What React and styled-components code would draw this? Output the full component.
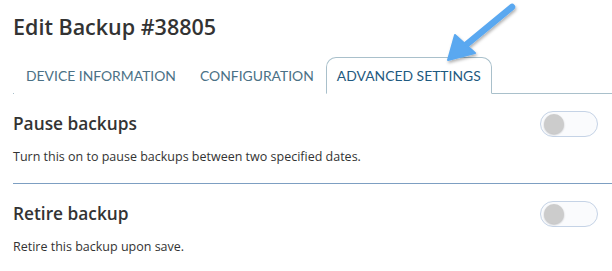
import React, { useState } from "react";
import styled, { createGlobalStyle } from "styled-components";

const GlobalStyle = createGlobalStyle`
  body {
    margin: 0;
    background: #ffffff;
    font-family: "Open Sans", "Liberation Sans", sans-serif;
    color: #333333;
  }
`;

const Page = styled.div`
  position: relative;
  padding: 13px 0 0 13px;
  width: 612px;
  box-sizing: border-box;
`;

const Title = styled.h1`
  margin: 0;
  font-size: 21.5px;
  font-weight: 600;
  line-height: 28px;
  color: #333333;
`;

const TabBar = styled.div`
  display: flex;
  margin-top: 16px;
  padding-left: 1px;
  height: 36px;
  border-bottom: 1px solid #a9c0cb;
`;

const Tab = styled.div`
  display: flex;
  align-items: center;
  padding: 0 ${(p) => (p.active ? "10px" : "12px")};
  margin-bottom: -1px;
  font-family: Lato, "Open Sans", sans-serif;
  font-size: 13.9px;
  color: ${(p) => (p.active ? "#1f5a80" : "#4b7186")};
  background: #ffffff;
  border: ${(p) => (p.active ? "1px solid #a9c0cb" : "none")};
  border-bottom-color: #ffffff;
  border-radius: 10px 10px 0 0;
`;

const Section = styled.div`
  padding: 17px 14px ${(p) => (p.last ? "0" : "17px")} 0;
  border-bottom: ${(p) => (p.last ? "none" : "1px solid #7d9fc2")};
`;

const Row = styled.div`
  display: flex;
  align-items: center;
  justify-content: space-between;
`;

const SectionTitle = styled.h2`
  margin: 0;
  font-size: 17.3px;
  font-weight: 600;
  line-height: 26px;
  color: #333333;
`;

const Description = styled.p`
  margin: 11px 0 0;
  font-size: 12.5px;
  line-height: 18px;
  color: #333333;
`;

const Switch = styled.button`
  position: relative;
  width: 58px;
  height: 26px;
  padding: 0;
  border-radius: 13px;
  border: 1px solid #c5d3e6;
  background: ${(p) => (p.on ? "#5aa8f0" : "#fafbfd")};
  cursor: pointer;

  &::after {
    content: "";
    position: absolute;
    top: 2px;
    left: ${(p) => (p.on ? "34px" : "3px")};
    width: 20px;
    height: 20px;
    border-radius: 50%;
    background: #cccccc;
    box-shadow: 0 1px 2px rgba(0, 0, 0, 0.25);
  }
`;

const Arrow = styled.svg`
  position: absolute;
  left: 440px;
  top: 0;
  pointer-events: none;
`;

const PointerArrow = () => (
  <Arrow width="90" height="72" viewBox="0 0 90 72">
    <defs>
      <filter id="sh" x="-20%" y="-20%" width="140%" height="140%">
        <feDropShadow dx="1" dy="2" stdDeviation="1.5" floodColor="#000" floodOpacity="0.3" />
      </filter>
    </defs>
    <g filter="url(#sh)" fill="#5aa8f0" stroke="#5aa8f0" strokeLinecap="round" strokeLinejoin="round">
      <line x1="72" y1="7" x2="21" y2="49" strokeWidth="6.5" />
      <polygon points="8,60 15,35 35,53" strokeWidth="2" />
    </g>
  </Arrow>
);

const SettingSection = ({ title, text, last }) => {
  const [on, setOn] = useState(false);
  return (
    <Section last={last}>
      <Row>
        <SectionTitle>{title}</SectionTitle>
        <Switch on={on ? 1 : 0} onClick={() => setOn(!on)} aria-label={title} />
      </Row>
      <Description>{text}</Description>
    </Section>
  );
};

export default function App() {
  return (
    <Page>
      <GlobalStyle />
      <Title>Edit Backup #38805</Title>
      <TabBar>
        <Tab>DEVICE INFORMATION</Tab>
        <Tab>CONFIGURATION</Tab>
        <Tab active>ADVANCED SETTINGS</Tab>
      </TabBar>
      <SettingSection
        title="Pause backups"
        text="Turn this on to pause backups between two specified dates."
      />
      <SettingSection title="Retire backup" text="Retire this backup upon save." last />
      <PointerArrow />
    </Page>
  );
}
